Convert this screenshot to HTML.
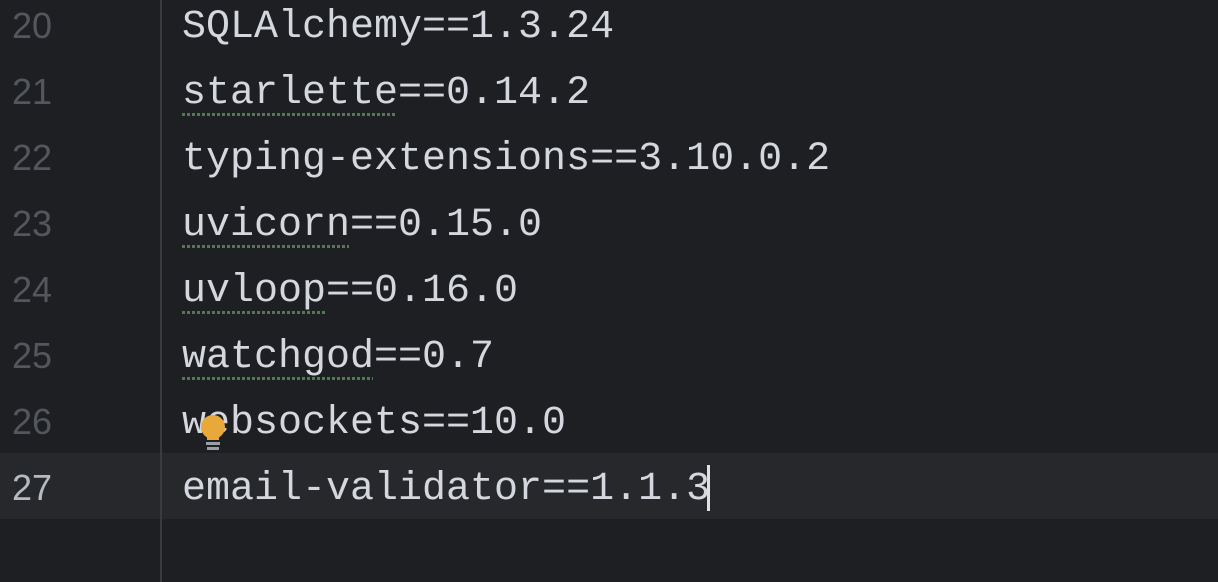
<!DOCTYPE html>
<html><head><style>
body{margin:0;width:1218px;height:582px;background:#1e1f22;overflow:hidden;position:relative;font-family:"Liberation Mono",monospace;}
.hl{position:absolute;left:0;top:453px;width:1218px;height:66px;background:#26282c;}
.gut{position:absolute;left:160px;top:0;width:2px;height:582px;background:#393b40;}
.n{position:absolute;left:12px;font-size:36px;color:#53565c;line-height:66px;font-family:"Liberation Sans",sans-serif;}
.t{position:absolute;left:182px;font-size:40px;color:#d4d7dd;line-height:66px;white-space:pre;}
.sq{position:absolute;left:182px;height:3px;background:repeating-linear-gradient(90deg,#4e7d4a 0 3px,transparent 3px 5px);}
.cur{position:absolute;left:707px;top:465px;width:3px;height:46px;background:#e0e0e0;}
</style></head><body>
<div class="hl"></div>
<div class="gut"></div>
<div class="n" style="top:-7px">20</div><div class="t" style="top:-5px">SQLAlchemy==1.3.24</div>
<div class="n" style="top:59px">21</div><div class="t" style="top:61px">starlette==0.14.2</div>
<div class="n" style="top:125px">22</div><div class="t" style="top:127px">typing-extensions==3.10.0.2</div>
<div class="n" style="top:191px">23</div><div class="t" style="top:193px">uvicorn==0.15.0</div>
<div class="n" style="top:257px">24</div><div class="t" style="top:259px">uvloop==0.16.0</div>
<div class="n" style="top:323px">25</div><div class="t" style="top:325px">watchgod==0.7</div>
<div class="n" style="top:389px">26</div><div class="t" style="top:391px">websockets==10.0</div>
<div class="n" style="top:455px;color:#b5b9c0">27</div><div class="t" style="top:457px">email-validator==1.1.3</div>
<div class="sq" style="top:113px;width:215px"></div>
<div class="sq" style="top:245px;width:167px"></div>
<div class="sq" style="top:311px;width:143px"></div>
<div class="sq" style="top:377px;width:191px"></div>
<div class="cur"></div>
<svg style="position:absolute;left:198px;top:412px" width="32" height="42" viewBox="0 0 32 42">
<circle cx="15" cy="15" r="12" fill="#e9a83a"/>
<rect x="9" y="22" width="12" height="6" fill="#e9a83a"/>
<rect x="8" y="30" width="14" height="3" fill="#9a9ea6"/>
<rect x="9" y="35" width="12" height="3" fill="#9a9ea6"/>
</svg>
</body></html>
